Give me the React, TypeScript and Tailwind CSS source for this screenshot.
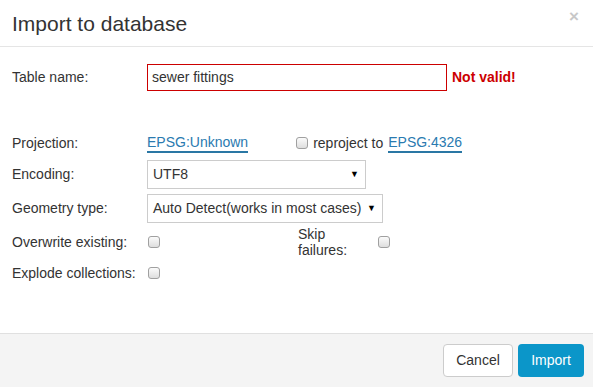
import { ReactNode } from "react";

function Check() {
  return (
    <span className="inline-block h-[12px] w-[12px] rounded-[3px] border border-[#a0a0a0] bg-gradient-to-b from-[#fbfbfb] to-[#dedede]" />
  );
}

function Label({ children }: { children: ReactNode }) {
  return <div className="w-[135px] shrink-0 text-[#333]">{children}</div>;
}

function Select({ value, width }: { value: string; width: string }) {
  return (
    <div
      className={`flex h-[29px] items-center justify-between border border-[#ccc] pl-[5px] pr-[6px] text-[#333] ${width}`}
    >
      <span>{value}</span>
      <span className="text-[9px] text-black">▼</span>
    </div>
  );
}

export default function App() {
  return (
    <div className="flex h-[387px] w-[593px] flex-col bg-white font-['Liberation_Sans',Arial,sans-serif] text-[14px] text-[#333]">
      <div className="flex h-[47px] shrink-0 items-center justify-between border-b border-[#e5e5e5] pl-[12px] pr-[14px]">
        <h1 className="text-[21px] leading-none text-[#333]">Import to database</h1>
        <span className="-mt-[14px] text-[17px] font-bold leading-none text-[#c8c8c8]">×</span>
      </div>

      <div className="flex-1 pl-[12px] pt-[17px]">
        <div className="flex h-[27px] items-center">
          <Label>Table name:</Label>
          <div className="flex h-[27px] w-[300px] items-center border border-[#cc0000] pl-[4px] text-[#333]">
            sewer fittings
          </div>
          <span className="ml-[5px] font-bold text-[#cc0000]">Not valid!</span>
        </div>

        <div className="mt-[40px] flex h-[24px] items-center">
          <Label>Projection:</Label>
          <span className="border-b-2 border-[#2a77a4] leading-[18px] text-[#2a7ab0]">EPSG:Unknown</span>
          <span className="ml-[48px] flex items-center gap-[5px]">
            <Check />
            <span>reproject to</span>
          </span>
          <span className="ml-[5px] border-b-2 border-[#2a77a4] leading-[18px] text-[#2a7ab0]">EPSG:4326</span>
        </div>

        <div className="mt-[5px] flex items-center">
          <Label>Encoding:</Label>
          <Select value="UTF8" width="w-[219px]" />
        </div>

        <div className="mt-[5px] flex items-center">
          <Label>Geometry type:</Label>
          <Select value="Auto Detect(works in most cases)" width="w-[236px]" />
        </div>

        <div className="mt-[3px] flex h-[32px] items-center">
          <Label>Overwrite existing:</Label>
          <span className="ml-[1px] flex"><Check /></span>
          <span className="ml-[138px] w-[80px] leading-[16px]">
            Skip
            <br />
            failures:
          </span>
          <span className="flex"><Check /></span>
        </div>

        <div className="flex h-[30px] items-center">
          <Label>Explode collections:</Label>
          <span className="ml-[1px] flex"><Check /></span>
        </div>
      </div>

      <div className="flex h-[54px] shrink-0 items-center justify-end gap-[5px] border-t border-[#e0e0e0] bg-[#f4f4f4] pr-[9px]">
        <button className="h-[33px] w-[70px] rounded-[4px] border border-[#ccc] bg-white text-[#333]">Cancel</button>
        <button className="h-[33px] w-[66px] rounded-[4px] bg-[#0b96c9] text-white">Import</button>
      </div>
    </div>
  );
}
